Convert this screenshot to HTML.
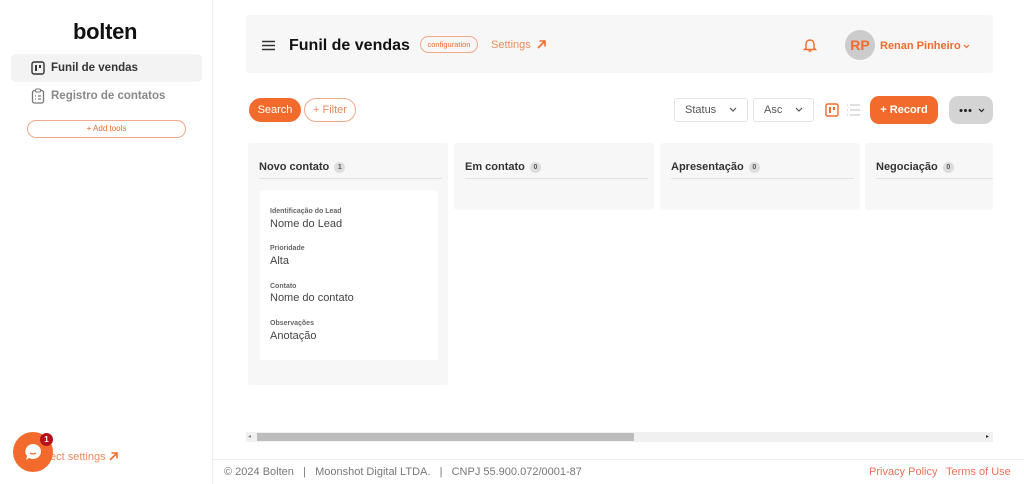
<!DOCTYPE html>
<html><head><meta charset="utf-8"><style>
*{box-sizing:border-box;margin:0;padding:0}
body{width:1024px;height:484px;overflow:hidden;background:#fff;font-family:"Liberation Sans",sans-serif;position:relative;color:#333}
.a{position:absolute}
.col{position:absolute;top:143px;background:#f7f7f7;border-radius:3px}
.ch{position:absolute;left:11px;top:18px;font-size:11px;font-weight:bold;color:#333;white-space:nowrap}
.ch span{display:inline-block;background:#ddd;border-radius:50%;width:11px;height:11px;font-size:7px;text-align:center;line-height:11px;color:#555;vertical-align:1px;margin-left:2px}
.hl{position:absolute;left:11px;right:6px;top:35px;height:1px;background:#e2e2e2}
.lb{position:absolute;left:10px;font-size:7px;font-weight:bold;color:#666}
.vl{position:absolute;left:10px;font-size:11px;color:#444}
.chev{position:absolute;right:10px;top:8px}
</style></head><body>
<div class="a" style="left:212px;top:0;width:1px;height:484px;background:#eee"></div>
<div class="a" style="left:73px;top:19px;font-size:22px;font-weight:bold;color:#111;letter-spacing:-0.3px">bolten</div>
<div class="a" style="left:11px;top:54px;width:191px;height:28px;background:#f3f3f3;border-radius:5px"></div>
<svg class="a" style="left:31px;top:61px" width="14" height="14" viewBox="0 0 14 14"><rect x="1" y="1" width="12" height="12" rx="2" fill="none" stroke="#333" stroke-width="1.4"/><rect x="4" y="4" width="2" height="6" fill="#333"/><rect x="8" y="4" width="2" height="3" fill="#333"/></svg>
<div class="a" style="left:51px;top:62px;font-size:11.5px;font-weight:bold;color:#333">Funil de vendas</div>
<svg class="a" style="left:31px;top:88px" width="14" height="16" viewBox="0 0 14 16"><rect x="1.5" y="2.5" width="11" height="12.5" rx="2" fill="none" stroke="#777" stroke-width="1.3"/><rect x="4.5" y="1" width="5" height="3" rx="1" fill="#fff" stroke="#777"/><path d="M4 8h1M7 8h3M4 11h1M7 11h3" stroke="#777" stroke-width="1.2"/></svg>
<div class="a" style="left:51px;top:90px;font-size:11.5px;font-weight:bold;color:#888">Registro de contatos</div>
<div class="a" style="left:27px;top:120px;width:159px;height:18px;border:1px solid #f0a98a;border-radius:9px;font-size:8px;color:#f26b2c;text-align:center;line-height:16px">+ Add tools</div>
<div class="a" style="left:50px;top:451px;font-size:11px;color:#f08a5d">ect settings</div>
<svg class="a" style="left:108px;top:451px" width="11" height="11" viewBox="0 0 11 11"><path d="M2 9L9 2M3.5 2H9V7.5" fill="none" stroke="#f26b2c" stroke-width="1.6"/></svg>
<div class="a" style="left:13px;top:432px;width:40px;height:40px;border-radius:50%;background:#f26b2c"></div>
<svg class="a" style="left:22px;top:441px" width="22" height="22" viewBox="0 0 22 22"><path d="M11 3a8 7.5 0 1 1-4 14l-3 2 1-4A8 7.5 0 0 1 11 3z" fill="#fff"/><path d="M8 12q3 2 6 0" stroke="#f26b2c" stroke-width="1.2" fill="none"/></svg>
<div class="a" style="left:40px;top:433px;width:13px;height:13px;border-radius:50%;background:#b3121b;color:#fff;font-size:8px;font-weight:bold;text-align:center;line-height:13px">1</div>

<div class="a" style="left:246px;top:15px;width:747px;height:58px;background:#f7f7f7;border-radius:4px"></div>
<svg class="a" style="left:262px;top:40px" width="13" height="11"><path d="M0 1.5h13M0 5.5h13M0 9.5h13" stroke="#333" stroke-width="1.5"/></svg>
<div class="a" style="left:289px;top:37px;font-size:16px;font-weight:bold;color:#111">Funil de vendas</div>
<div class="a" style="left:420px;top:36px;width:58px;height:17px;border:1px solid #f0a98a;border-radius:9px;font-size:7.5px;color:#f26b2c;text-align:center;line-height:15px">configuration</div>
<div class="a" style="left:491px;top:39px;font-size:11px;color:#f08a5d">Settings</div>
<svg class="a" style="left:536px;top:39px" width="11" height="11" viewBox="0 0 11 11"><path d="M2 9L9 2M3.5 2H9V7.5" fill="none" stroke="#f26b2c" stroke-width="1.6"/></svg>
<svg class="a" style="left:802px;top:37px" width="16" height="16" viewBox="0 0 16 16"><path d="M4 11V7a4 4 0 0 1 8 0v4l1.5 1.5h-11z" fill="none" stroke="#f26b2c" stroke-width="1.4"/><path d="M6.5 14h3" stroke="#f26b2c" stroke-width="1.4"/></svg>
<div class="a" style="left:845px;top:30px;width:30px;height:30px;border-radius:50%;background:#ccc;color:#f26b2c;font-weight:bold;font-size:14px;text-align:center;line-height:30px">RP</div>
<div class="a" style="left:880px;top:40px;font-size:11px;font-weight:bold;color:#f26b2c">Renan Pinheiro</div>
<svg class="a" style="left:963px;top:44px" width="7" height="5"><path d="M1 1l2.5 2.5L6 1" stroke="#f26b2c" stroke-width="1.2" fill="none"/></svg>

<div class="a" style="left:249px;top:98px;width:52px;height:24px;border-radius:12px;background:#f26b2c;color:#fff;font-size:11px;text-align:center;line-height:24px">Search</div>
<div class="a" style="left:304px;top:98px;width:52px;height:24px;border-radius:12px;border:1px solid #f0a98a;color:#f08a5d;font-size:11px;text-align:center;line-height:22px">+ Filter</div>
<div class="a" style="left:674px;top:98px;width:74px;height:24px;border:1px solid #e4e4e4;border-radius:3px;font-size:11px;color:#555;padding-left:10px;line-height:22px">Status<svg class="chev" width="8" height="6"><path d="M1 1l3 3 3-3" stroke="#555" stroke-width="1.2" fill="none"/></svg></div>
<div class="a" style="left:753px;top:98px;width:61px;height:24px;border:1px solid #e4e4e4;border-radius:3px;font-size:11px;color:#555;padding-left:10px;line-height:22px">Asc<svg class="chev" width="8" height="6"><path d="M1 1l3 3 3-3" stroke="#555" stroke-width="1.2" fill="none"/></svg></div>
<svg class="a" style="left:825px;top:103px" width="14" height="14"><rect x="1" y="1" width="12" height="12" rx="1.5" fill="none" stroke="#f26b2c" stroke-width="1.4"/><rect x="4" y="4" width="2" height="6" fill="#f26b2c"/><rect x="8" y="4" width="2" height="3" fill="#f26b2c"/></svg>
<svg class="a" style="left:846px;top:103px" width="15" height="14"><path d="M1 2h1M4 2h10M1 7h1M4 7h10M1 12h1M4 12h10" stroke="#ccc" stroke-width="1.2"/></svg>
<div class="a" style="left:870px;top:96px;width:68px;height:28px;border-radius:9px;background:#f26b2c;color:#fff;font-size:11px;font-weight:bold;text-align:center;line-height:28px">+ Record</div>
<div class="a" style="left:949px;top:96px;width:44px;height:28px;border-radius:9px;background:#d4d4d4"></div>
<svg class="a" style="left:959px;top:108px" width="28" height="5"><circle cx="2" cy="2.5" r="1.5" fill="#222"/><circle cx="6.5" cy="2.5" r="1.5" fill="#222"/><circle cx="11" cy="2.5" r="1.5" fill="#222"/><path d="M20 1l2.5 2.5L25 1" stroke="#222" stroke-width="1.2" fill="none"/></svg>

<div class="col" style="left:248px;width:200px;height:242px"><div class="ch">Novo contato <span>1</span></div><div class="hl"></div>
<div class="a" style="left:12px;top:47px;width:178px;height:170px;background:#fff;border-radius:3px">
<div class="lb" style="top:18px">Identificação do Lead</div><div class="vl" style="top:28px">Nome do Lead</div>
<div class="lb" style="top:55px">Prioridade</div><div class="vl" style="top:65px">Alta</div>
<div class="lb" style="top:93px">Contato</div><div class="vl" style="top:102px">Nome do contato</div>
<div class="lb" style="top:130px">Observações</div><div class="vl" style="top:140px">Anotação</div></div></div>
<div class="col" style="left:454px;width:200px;height:67px"><div class="ch">Em contato <span>0</span></div><div class="hl"></div></div>
<div class="col" style="left:660px;width:200px;height:67px"><div class="ch">Apresentação <span>0</span></div><div class="hl"></div></div>
<div class="col" style="left:865px;width:128px;height:67px"><div class="ch">Negociação <span>0</span></div><div class="hl" style="right:0"></div></div>

<div class="a" style="left:246px;top:432px;width:747px;height:10px;background:#f0f0f0"></div>
<div class="a" style="left:257px;top:433px;width:377px;height:8px;background:#bdbdbd"></div>
<div class="a" style="left:248px;top:433px;font-size:6px;color:#888">◂</div>
<div class="a" style="left:986px;top:433px;font-size:6px;color:#333">▸</div>
<div class="a" style="left:213px;top:459px;width:811px;height:1px;background:#eee"></div>
<div class="a" style="left:224px;top:466px;font-size:11px;color:#777;white-space:pre">© 2024 Bolten   |   Moonshot Digital LTDA.   |   CNPJ 55.900.072/0001-87</div>
<div class="a" style="left:869px;top:466px;font-size:11px;color:#f0705a">Privacy Policy</div>
<div class="a" style="left:946px;top:466px;font-size:11px;color:#f0705a">Terms of Use</div>
</body></html>
